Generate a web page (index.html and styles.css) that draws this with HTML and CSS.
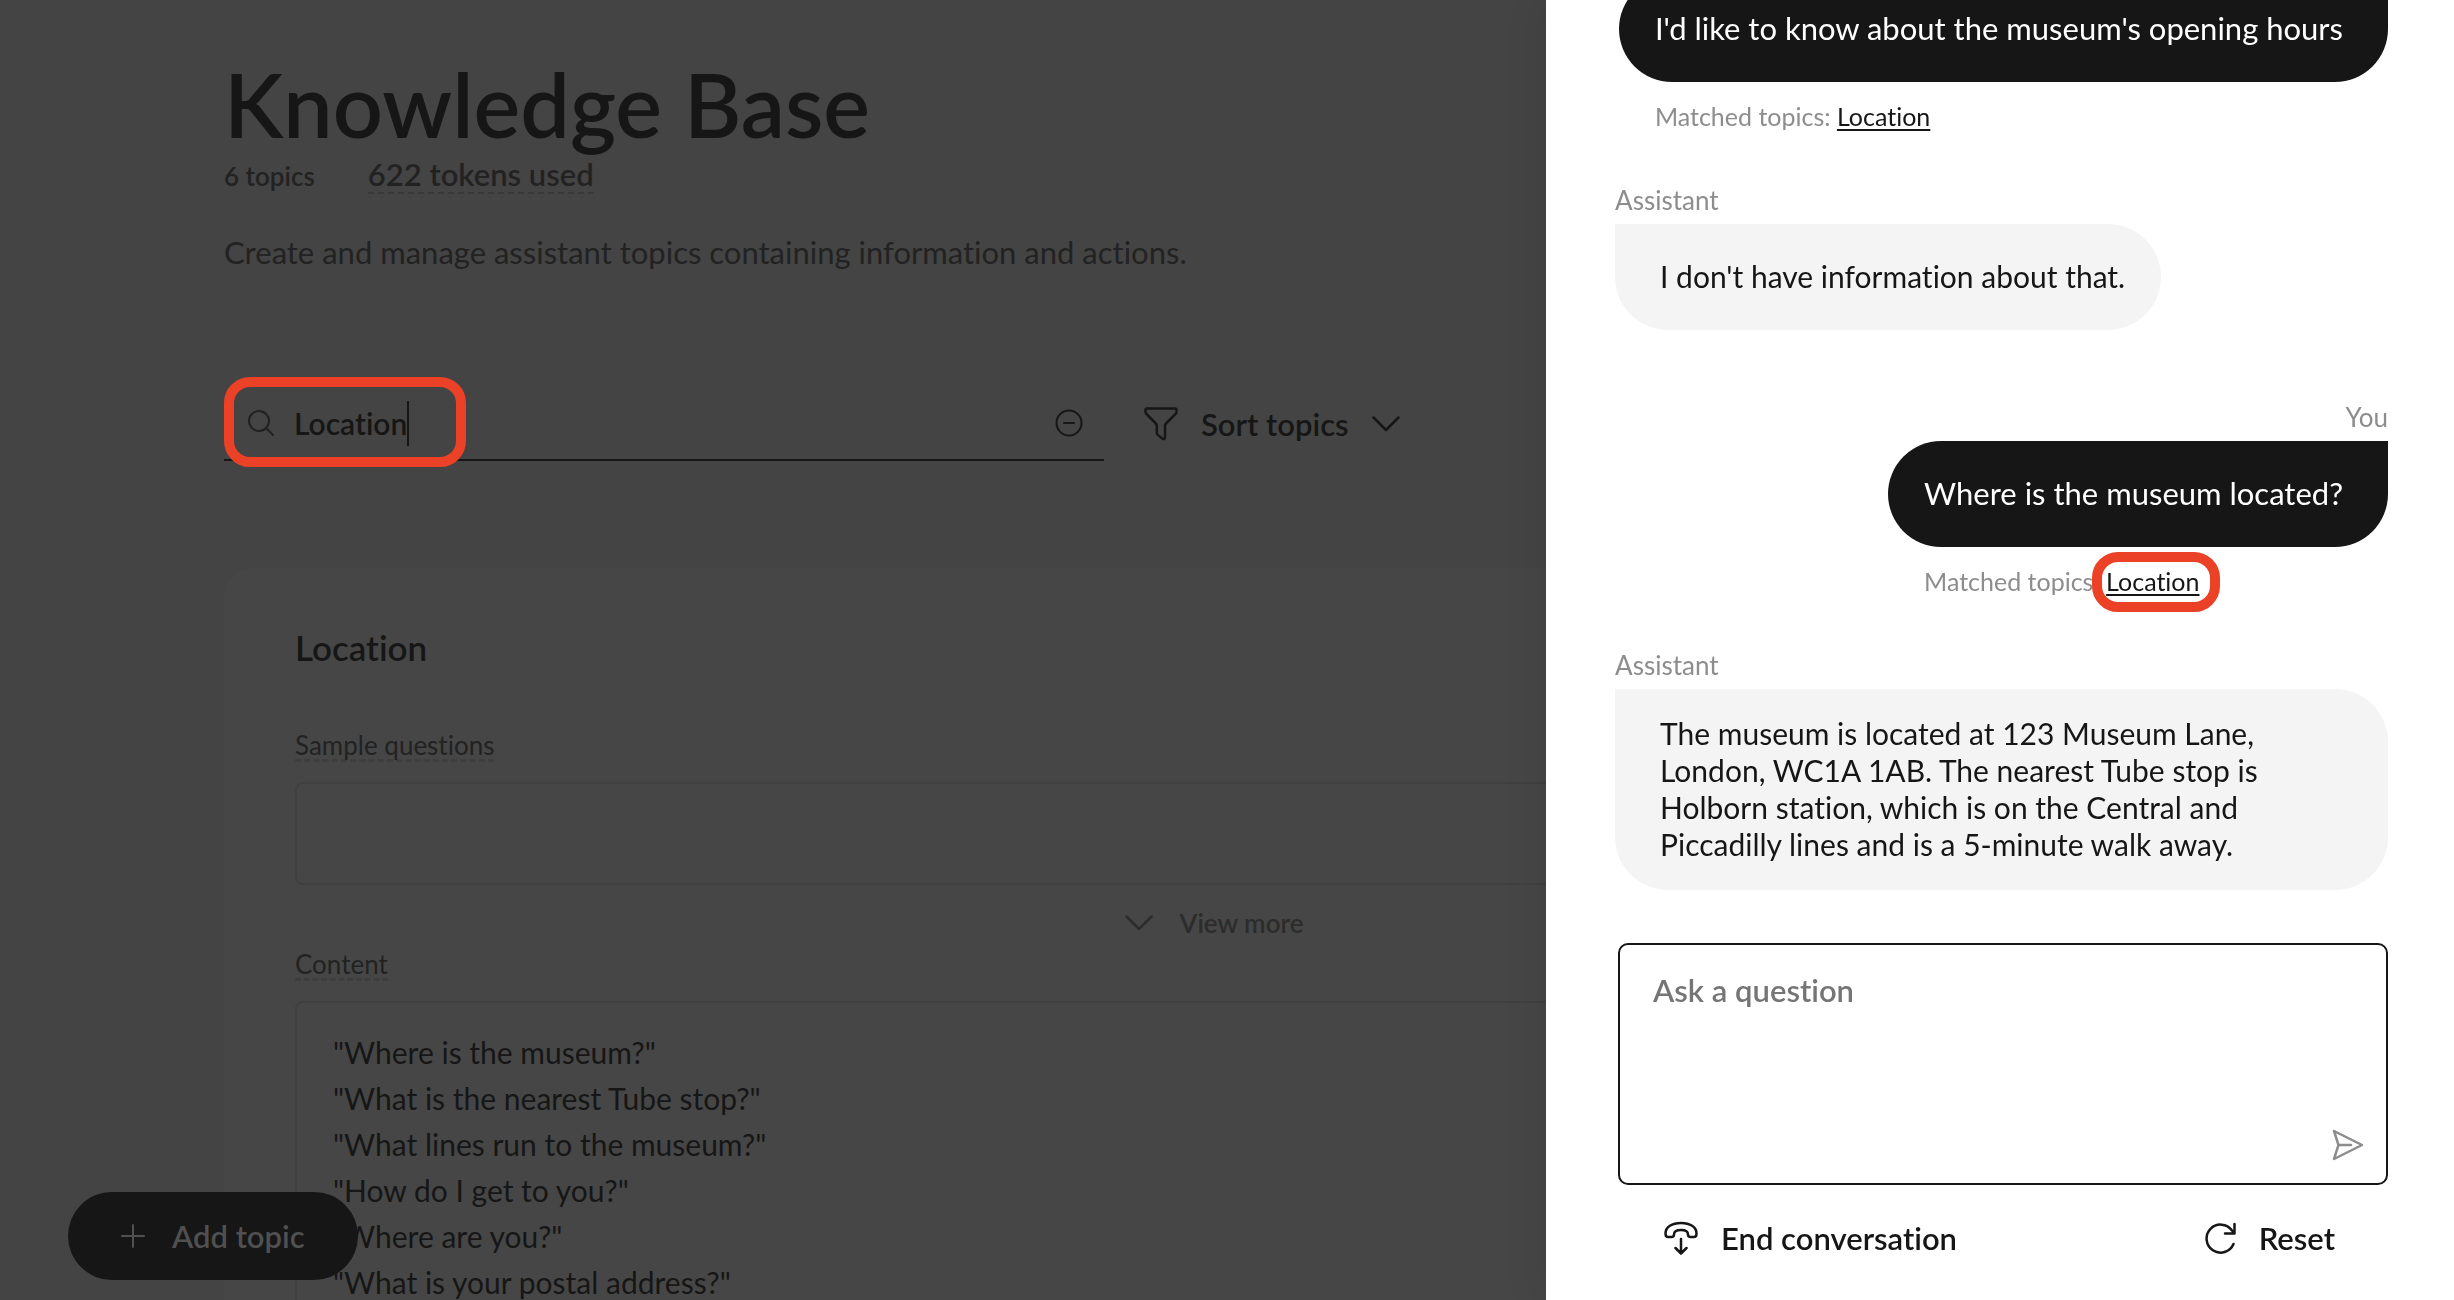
FILE: index.html
```html
<!DOCTYPE html>
<html lang="en">
<head>
<meta charset="utf-8">
<title>Knowledge Base</title>
<link rel="stylesheet" href="styles.css">
</head>
<body>
<main class="page">
  <header class="intro">
    <h1 class="title">Knowledge Base</h1>
    <div class="stats">
      <span class="topics">6 topics</span>
      <span class="tokens">622 tokens used</span>
    </div>
    <p class="lead">Create and manage assistant topics containing information and actions.</p>
  </header>

  <div class="toolbar">
    <div class="search">
      <svg class="search-icon" viewBox="0 0 26 26" fill="none" stroke="currentColor" stroke-width="2" stroke-linecap="round"><circle cx="11" cy="11" r="10"/><path d="M18.500 18.500 25 25"/></svg>
      <input class="search-input" type="text" aria-label="Search topics" value="Location">
      <span class="caret"></span>
      <button class="clear" type="button" aria-label="Clear search">
        <svg viewBox="0 0 28 28" width="28" height="28" fill="none" stroke="currentColor" stroke-width="2" stroke-linecap="round"><circle cx="14" cy="14" r="12.500"/><path d="M9 14h10"/></svg>
      </button>
      <span class="highlight highlight-search"></span>
    </div>
    <button class="sort" type="button">
      <svg viewBox="0 0 34 34" width="34" height="34" fill="none" stroke="currentColor" stroke-width="2.500" stroke-linejoin="round"><path d="M3 1.500h28c1 0 1.500.6 1.500 1.500v2c0 .8-.3 1.300-.9 1.900L22 16.500c-.7.700-1 1.300-1 2.200V30c0 2-1.300 2.700-2.800 1.500l-4.400-3.600c-.7-.6-1-1.200-1-2V18.700c0-.9-.3-1.500-1-2.200L2.400 6.900C1.800 6.300 1.500 5.800 1.500 5V3c0-.9.5-1.500 1.500-1.500z"/></svg>
      <span>Sort topics</span>
      <svg viewBox="0 0 28 16" width="28" height="16" fill="none" stroke="currentColor" stroke-width="2.500" stroke-linecap="round" stroke-linejoin="round"><path d="M1.500 1.500 14 14 26.500 1.500"/></svg>
    </button>
  </div>

  <section class="card">
    <h2 class="card-title">Location</h2>
    <label class="field-label" for="samples">Sample questions</label>
    <input class="box samples" id="samples" type="text">
    <button class="more" type="button">
      <svg viewBox="0 0 28 16" width="28" height="16" fill="none" stroke="currentColor" stroke-width="2.500" stroke-linecap="round" stroke-linejoin="round"><path d="M1.500 1.500 14 14 26.500 1.500"/></svg>
      <span>View more</span>
    </button>
    <label class="field-label" for="content">Content</label>
    <textarea class="box content" id="content" rows="6">"Where is the museum?"
"What is the nearest Tube stop?"
"What lines run to the museum?"
"How do I get to you?"
"Where are you?"
"What is your postal address?"</textarea>
  </section>
</main>

<button class="add" type="button">
  <svg viewBox="0 0 24 24" width="24" height="24" fill="none" stroke="currentColor" stroke-width="2" stroke-linecap="round"><path d="M12 1v22M1 12h22"/></svg>
  <span>Add topic</span>
</button>

<aside class="drawer">
  <div class="messages">
    <div class="message you">
      <p class="bubble">I'd like to know about the museum's opening hours</p>
      <p class="matched">Matched topics: <a href="#location">Location</a></p>
    </div>
    <div class="message">
      <span class="who">Assistant</span>
      <p class="bubble">I don't have information about that.</p>
    </div>
    <div class="message you">
      <span class="who">You</span>
      <p class="bubble">Where is the museum located?</p>
      <p class="matched">Matched topics: <a class="marked" href="#location">Location<span class="highlight highlight-link"></span></a></p>
    </div>
    <div class="message">
      <span class="who">Assistant</span>
      <p class="bubble">The museum is located at 123 Museum Lane, London, WC1A 1AB. The nearest Tube stop is Holborn station, which is on the Central and Piccadilly lines and is a 5-minute walk away.</p>
    </div>
  </div>
  <form class="composer">
    <textarea class="question" aria-label="Ask a question" placeholder="Ask a question"></textarea>
    <button class="send" type="button" aria-label="Send">
      <svg viewBox="0 0 32 32" width="32" height="32" fill="none" stroke="currentColor" stroke-width="2.500" stroke-linejoin="round" stroke-linecap="round"><path d="M2 2 30 16 2 30 6.500 16zM6.500 16H19"/></svg>
    </button>
  </form>
  <div class="actions">
    <button class="action" type="button">
      <svg viewBox="0 0 34 34" width="34" height="34" fill="none" stroke="currentColor" stroke-width="2.500" stroke-linejoin="round" stroke-linecap="round"><path d="M1.500 12.500C1.500 6 8 2 17 2s15.500 4 15.500 10.500c0 2-.4 3.500-2.500 3.500h-3.500c-1.500 0-2.500-1-2.500-2.500C24 10.500 21 9 17 9s-7 1.500-7 4.500C10 15 9 16 7.500 16H4c-2.100 0-2.500-1.500-2.500-3.500zM17 18v14M11.500 27l5.500 5.500 5.500-5.500"/></svg>
      <span>End conversation</span>
    </button>
    <button class="action" type="button">
      <svg viewBox="0 0 32 32" width="32" height="32" fill="none" stroke="currentColor" stroke-width="2.500" stroke-linejoin="round" stroke-linecap="round"><path d="M29.500 22A14 14 0 1 1 28 8.500L30 11M30.500 2v9.500H21"/></svg>
      <span>Reset</span>
    </button>
  </div>
</aside>
</body>
</html>
```
FILE: styles.css
```css
* { box-sizing: border-box; }
body, h1, h2, p { margin: 0; }
body {
  height: 100vh;
  overflow: hidden;
  background: #444;
  color: #161616;
  font: 400 30px/36px Lato, "Open Sans", sans-serif;
  font-variant-ligatures: none;
}
button, input, textarea { font: inherit; font-variant-ligatures: none; color: inherit; background: none; border: 0; padding: 0; margin: 0; outline: 0; }
textarea { display: block; resize: none; overflow: hidden; }
svg { flex: none; }

.page { height: 100vh; overflow: hidden; padding: 52px 250px 0 224px; }
.title { font-size: 88px; line-height: 104px; font-weight: 600; }
.stats { display: flex; align-items: baseline; gap: 53px; color: #222; font-weight: 600; }
.topics { font-size: 26px; }
.tokens { font-size: 31px; border-bottom: 2px dashed #383838; }
.lead { margin-top: 40px; font-size: 31px; color: #222; }

.toolbar { display: flex; align-items: center; gap: 40px; margin-top: 117px; }
.search { position: relative; display: flex; align-items: center; width: 880px; height: 74px; padding: 0 21px 0 24px; border-bottom: 2px solid #161616; }
.search-icon { width: 26px; height: 26px; margin-right: 20px; color: #222; }
.search-input { field-sizing: content; font-weight: 600; }
.caret { width: 2px; height: 45px; background: #161616; }
.clear { display: flex; margin-left: auto; }
.sort { display: flex; align-items: center; gap: 23px; font-size: 31px; font-weight: 600; }

.highlight { position: absolute; border: 10px solid #eb4126; border-radius: 26px; pointer-events: none; }
.highlight-search { left: 0; top: -10px; width: 242px; height: 90px; }
.highlight-link { left: -14px; top: -13px; width: 128px; height: 60px; }

.card { display: flex; flex-direction: column; align-items: flex-start; margin-top: 107px; padding: 58px 71px; border-radius: 28px; background: #464646; }
.card-title { font-size: 35px; line-height: 42px; font-weight: 600; }
.field-label { font-size: 26px; line-height: 28px; color: #222; border-bottom: 3px dashed #3e3e3e; }
.card-title + .field-label { margin-top: 63px; }
.box { width: 100%; border: 2px solid #404040; border-radius: 8px; margin-top: 20px; }
.samples { height: 103px; padding: 0 36px; }
.more { display: flex; align-items: center; align-self: center; gap: 27px; margin: 18px 0 7px; font-size: 26px; font-weight: 600; line-height: 40px; color: #2c2c2c; }
.content { padding: 26px 36px; line-height: 46px; }

.add { position: fixed; left: 68px; bottom: 20px; display: flex; align-items: center; gap: 27px; padding: 0 53px; height: 88px; border-radius: 44px; background: #161616; color: #505050; font-size: 31px; font-weight: 600; }

.drawer { position: fixed; inset: 0 0 0 auto; width: 37%; display: flex; flex-direction: column; padding: 0 66px 38px 69px; background: #fff; box-shadow: 0 0 40px rgba(0, 0, 0, .1); }
.messages { flex: 1; min-height: 0; display: flex; flex-direction: column; justify-content: flex-end; overflow: hidden; padding-bottom: 53px; line-height: 37px; }
.message { flex: none; display: flex; flex-direction: column; align-items: flex-start; margin-bottom: 72px; }
.message:last-child { margin-bottom: 0; }
.message.you { align-self: flex-end; align-items: flex-end; margin-bottom: 53px; }
.who { margin-bottom: 8px; font-size: 26px; line-height: 31px; color: #8d8d8d; }
.bubble { display: flex; align-items: center; min-height: 106px; padding: 26px 36px 27px 45px; background: #f4f4f4; border-radius: 0 53px 53px 53px; }
.you .bubble { padding: 26px 45px 27px 36px; border-radius: 53px 0 53px 53px; background: #161616; color: #fff; font-size: 31px; }
.matched { align-self: flex-start; margin-top: 18px; padding-left: 36px; font-size: 25px; line-height: 32px; color: #8d8d8d; }
.matched a { color: #161616; text-underline-offset: 3px; text-decoration-thickness: 2px; }
.marked { position: relative; display: inline-block; }

.composer { position: relative; margin-left: 3px; }
.question { width: 100%; height: 242px; padding: 27px 33px; border: 2px solid #161616; border-radius: 10px; font-size: 31px; font-weight: 600; }
.question::placeholder { color: #757575; opacity: 1; }
.send { position: absolute; right: 24px; bottom: 24px; display: flex; color: #8d8d8d; }
.actions { display: flex; justify-content: space-between; margin: 29px 53px 0 49px; }
.action { display: flex; align-items: center; gap: 23px; height: 48px; font-size: 31px; font-weight: 600; }
```
